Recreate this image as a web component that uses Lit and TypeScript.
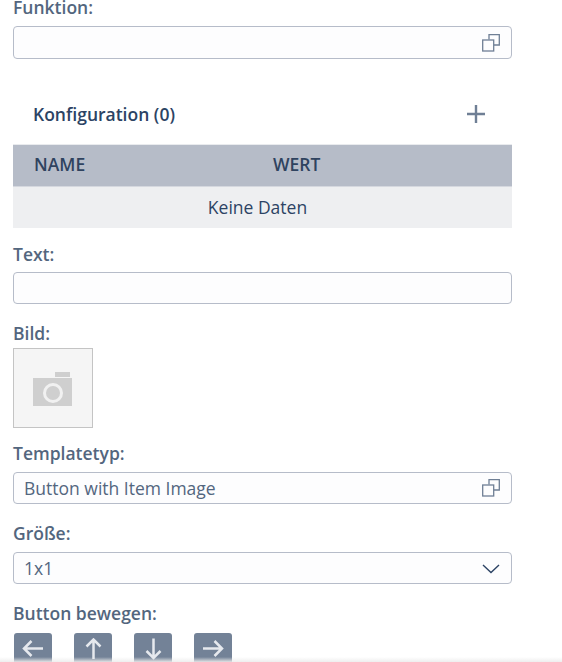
import { LitElement, html, css, svg } from "lit";
import { customElement } from "lit/decorators.js";

const valueHelp = svg`<svg class="ico" width="18" height="18" viewBox="0 0 18 18" fill="none" stroke="#6f7f95" stroke-width="1.300"><path d="M7 5.500V.7h10.300V11H12"/><rect x=".7" y="6" width="11" height="11"/></svg>`;
const chevron = svg`<svg class="ico" width="18" height="18" viewBox="0 0 18 18" fill="none" stroke="#2c4364" stroke-width="1.400"><path d="M1 6l8 7.500L17 6"/></svg>`;
const arrows: Record<string, string> = {
  left: "M21 10.500H2M9.500 3 2 10.500 9.500 18",
  up: "M11.500 21V1.500M4.500 8.500l7-7 7 7",
  down: "M11.500 .5V20M4.500 13l7 7 7-7",
  right: "M1 10.500h19M12.500 3 20 10.500 12.500 18",
};

@customElement("app-root")
export class AppRoot extends LitElement {
  static styles = css`
    :host {
      display: block;
      width: 562px;
      height: 662px;
      overflow: hidden;
      position: relative;
      background: #fff;
      font-family: "Open Sans", sans-serif;
      font-size: 17.5px;
      color: #2c4364;
    }
    .form {
      display: flex;
      flex-direction: column;
      width: 499px;
      margin: -4px 0 0 13px;
    }
    .label {
      font-weight: 600;
      color: #53667e;
      line-height: 22px;
      height: 22px;
    }
    .field {
      box-sizing: border-box;
      height: 32px;
      margin-top: 8px;
      border: 1px solid #b6bcc9;
      border-radius: 4px;
      background: #fdfdfe;
      display: flex;
      align-items: center;
      justify-content: space-between;
      padding: 0 10px 0 10px;
      color: #53667e;
    }
    .field.first { height: 33px; }
    .field.tight { margin-top: 7px; }
    .ico { display: block; margin-right: 1px; }
    .head {
      display: flex;
      align-items: center;
      justify-content: space-between;
      height: 40px;
      margin-top: 35px;
      padding: 0 26px 0 20px;
      font-weight: 600;
      color: #2c4364;
    }
    .plus { display: block; }
    .thead {
      display: flex;
      align-items: center;
      height: 43px;
      margin-top: 10px;
      background: #b6bcc8;
      border-top: 1px solid #e9ebee;
      border-bottom: 1px solid #d5d8df;
      box-sizing: border-box;
      font-weight: 600;
      color: #2f435f;
      padding-left: 21px;
      padding-bottom: 3px;
    }
    .thead span:first-child { width: 239px; }
    .empty {
      height: 41px;
      box-sizing: border-box;
      background: #eeeff1;
      display: flex;
      align-items: center;
      justify-content: center;
      padding: 0 10px 1px 0;
    }
    .gap-a { margin-top: 15px; }
    .gap-t { margin-top: 14px; }
    .gap-b { margin-top: 18px; }
    .photo {
      box-sizing: border-box;
      width: 80px;
      height: 80px;
      margin-top: 4px;
      border: 1px solid #c4c4c4;
      background: #f5f5f5;
      display: flex;
      align-items: center;
      justify-content: center;
    }
    .moves {
      display: flex;
      gap: 22px;
      margin-top: 9px;
      padding-left: 1px;
    }
    .move {
      width: 38px;
      height: 38px;
      flex: none;
      border-radius: 3px;
      background: #738297;
      display: flex;
      align-items: center;
      justify-content: center;
      padding-bottom: 7px;
      box-sizing: border-box;
    }
    .fade {
      position: absolute;
      left: 0;
      right: 0;
      bottom: 0;
      height: 5px;
      background: linear-gradient(rgba(240, 240, 240, 0), rgba(236, 236, 236, 0.9));
    }
  `;

  private move(dir: string) {
    return html`<div class="move">
      <svg width="22" height="22" viewBox="0 0 22 22" fill="none" stroke="#e6e9ee" stroke-width="2.500"><path d=${arrows[dir]} /></svg>
    </div>`;
  }

  render() {
    return html`
      <div class="form">
        <div class="label">Funktion:</div>
        <div class="field first"><span></span>${valueHelp}</div>

        <div class="head">
          <span>Konfiguration (0)</span>
          <svg class="plus" width="20" height="20" viewBox="0 0 20 20" fill="none" stroke="#6f7f95" stroke-width="2.400"><path d="M10 1v18M1 10h18" /></svg>
        </div>
        <div class="thead"><span>NAME</span><span>WERT</span></div>
        <div class="empty">Keine Daten</div>

        <div class="label gap-a">Text:</div>
        <div class="field tight"></div>

        <div class="label gap-b">Bild:</div>
        <div class="photo">
          <svg width="40" height="36" viewBox="0 0 40 36">
            <path fill="#cfcfcf" d="M22 2h15v5H22zM0 8h39v28H0z" />
            <circle cx="20" cy="23" r="8.500" fill="none" stroke="#f1f1f1" stroke-width="3" />
          </svg>
        </div>

        <div class="label gap-t">Templatetyp:</div>
        <div class="field"><span>Button with Item Image</span>${valueHelp}</div>

        <div class="label gap-b">Größe:</div>
        <div class="field"><span>1x1</span>${chevron}</div>

        <div class="label gap-b">Button bewegen:</div>
        <div class="moves">
          ${this.move("left")}${this.move("up")}${this.move("down")}${this.move("right")}
        </div>
      </div>
      <div class="fade"></div>
    `;
  }
}
